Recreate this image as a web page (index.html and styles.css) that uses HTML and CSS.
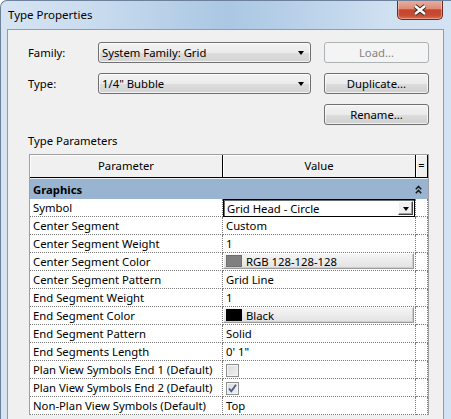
FILE: index.html
```html
<!DOCTYPE html>
<html>
<head>
<meta charset="utf-8">
<title>Type Properties</title>
<link rel="stylesheet" href="styles.css">
</head>
<body>
<div class="window">
  <div class="titlebar">
    <span class="title">Type Properties</span>
    <div class="close">
      <svg width="16" height="12" viewBox="0 0 16 12">
        <path d="M3 2 L13 10 M13 2 L3 10" stroke="#3b2a26" stroke-width="4.2" fill="none"/>
        <path d="M3 2 L13 10 M13 2 L3 10" stroke="#ffffff" stroke-width="2.4" fill="none"/>
      </svg>
    </div>
  </div>
  <div class="client">
    <div class="form">
      <span class="lbl">Family:</span>
      <div class="combo"><span>System Family: Grid</span><span class="arrow"></span></div>
      <div class="btn disabled">Load...</div>

      <span class="lbl">Type:</span>
      <div class="combo"><span>1/4" Bubble</span><span class="arrow"></span></div>
      <div class="btn">Duplicate...</div>

      <div class="btn third">Rename...</div>
    </div>

    <div class="section-label">Type Parameters</div>

    <div class="grid">
      <div class="thead">
        <div class="th">Parameter</div>
        <div class="th">Value</div>
        <div class="th eq">=</div>
      </div>
      <div class="group">
        <span>Graphics</span>
        <svg class="chev" width="7" height="9" viewBox="0 0 7 9">
          <path d="M0.8 4.2 L3.5 1.4 L6.2 4.2 M0.8 8.2 L3.5 5.4 L6.2 8.2" stroke="#1a1a1a" stroke-width="1.5" fill="none"/>
        </svg>
      </div>

      <div class="row">
        <div class="cell">Symbol</div>
        <div class="cell vsel">
          <div class="vcombo"><span>Grid Head - Circle</span><span class="dd"><span class="arrow"></span></span></div>
        </div>
        <div class="cell"></div>
      </div>
      <div class="row">
        <div class="cell">Center Segment</div>
        <div class="cell">Custom</div>
        <div class="cell"></div>
      </div>
      <div class="row">
        <div class="cell">Center Segment Weight</div>
        <div class="cell">1</div>
        <div class="cell"></div>
      </div>
      <div class="row">
        <div class="cell">Center Segment Color</div>
        <div class="cell vbtn"><div class="colorbtn"><span class="swatch gray"></span><span>RGB 128-128-128</span></div></div>
        <div class="cell"></div>
      </div>
      <div class="row">
        <div class="cell">Center Segment Pattern</div>
        <div class="cell">Grid Line</div>
        <div class="cell"></div>
      </div>
      <div class="row">
        <div class="cell">End Segment Weight</div>
        <div class="cell">1</div>
        <div class="cell"></div>
      </div>
      <div class="row">
        <div class="cell">End Segment Color</div>
        <div class="cell vbtn"><div class="colorbtn"><span class="swatch black"></span><span>Black</span></div></div>
        <div class="cell"></div>
      </div>
      <div class="row">
        <div class="cell">End Segment Pattern</div>
        <div class="cell">Solid</div>
        <div class="cell"></div>
      </div>
      <div class="row">
        <div class="cell">End Segments Length</div>
        <div class="cell">0' 1"</div>
        <div class="cell"></div>
      </div>
      <div class="row">
        <div class="cell">Plan View Symbols End 1 (Default)</div>
        <div class="cell"><span class="check"></span></div>
        <div class="cell"></div>
      </div>
      <div class="row">
        <div class="cell">Plan View Symbols End 2 (Default)</div>
        <div class="cell"><span class="check">
          <svg width="11" height="11" viewBox="0 0 11 11"><path d="M2 5.5 L4.3 8.2 L9 1.8" stroke="#4b5b8c" stroke-width="1.8" fill="none"/></svg>
        </span></div>
        <div class="cell"></div>
      </div>
      <div class="row">
        <div class="cell">Non-Plan View Symbols (Default)</div>
        <div class="cell">Top</div>
        <div class="cell"></div>
      </div>
    </div>
  </div>
</div>
</body>
</html>
```

FILE: styles.css
```css
* { box-sizing: border-box; }
html, body { margin: 0; padding: 0; }
body {
  width: 451px;
  height: 419px;
  overflow: hidden;
  background: #ffffff;
  font-family: "Noto Sans", "Liberation Sans", Arial, sans-serif;
  font-size: 11.3px;
  color: #000;
}

.window {
  width: 451px;
  height: 419px;
  display: flex;
  flex-direction: column;
  border-top: 1px solid #6d819b;
  border-left: 1px solid #6d819b;
  border-top-left-radius: 7px;
  overflow: hidden;
  background:
    linear-gradient(90deg, #d6e4f2 0%, #c8dbee 22%, #aac7e3 50%, #b9d1e9 66%, #cfe0f1 86%, #d3e3f3 100%);
}

.titlebar {
  height: 28px;
  display: flex;
  align-items: flex-start;
  padding-left: 7px;
}
.title {
  margin-top: 6px;
  line-height: 16px;
  font-size: 11.5px;
  color: #000;
}
.close {
  margin-left: auto;
  margin-right: 8px;
  margin-top: -1px;
  width: 46px;
  height: 20px;
  border: 1px solid #6e2a1f;
  border-top: none;
  border-radius: 0 0 5px 5px;
  background: linear-gradient(180deg, #eab0a2 0%, #dd8c78 45%, #c8452d 52%, #c74a31 80%, #d8704f 100%);
  box-shadow: inset 0 0 0 1px rgba(255, 220, 210, 0.45);
  display: flex;
  align-items: center;
  justify-content: center;
}
.close svg { display: block; }

.client {
  margin-left: 6px;
  width: 437px;
  flex: 1;
  border: 1px solid #8d9cae;
  border-bottom: none;
  background: #f0f0f0;
  padding: 12px 0 0 20px;
}

.form {
  display: grid;
  grid-template-columns: 57px 213px 105px;
  grid-auto-rows: 21px;
  column-gap: 13px;
  row-gap: 10px;
}
.lbl {
  line-height: 21px;
}
.combo {
  display: flex;
  align-items: center;
  justify-content: space-between;
  border: 1px solid #707070;
  border-radius: 3px;
  background: linear-gradient(180deg, #f3f3f3 0%, #ebebeb 50%, #dddddd 51%, #d3d3d3 100%);
  padding: 0 6px 0 3px;
  box-shadow: inset 0 0 0 1px rgba(255,255,255,0.7);
  line-height: 19px;
}
.arrow {
  width: 0;
  height: 0;
  border-left: 3.5px solid transparent;
  border-right: 3.5px solid transparent;
  border-top: 4px solid #000;
}
.btn {
  border: 1px solid #707070;
  border-radius: 3px;
  background: linear-gradient(180deg, #f2f2f2 0%, #ebebeb 50%, #dddddd 51%, #cfcfcf 100%);
  box-shadow: inset 0 0 0 1px rgba(255,255,255,0.7);
  text-align: center;
  line-height: 19px;
}
.btn.disabled {
  border-color: #adb2b5;
  background: #f4f4f4;
  color: #838383;
  box-shadow: none;
}
.btn.third { grid-column: 3; }

.section-label {
  margin-top: 8px;
  line-height: 15px;
}

.grid {
  margin-top: 6px;
  margin-left: 1px;
  width: 400px;
  border: 1px solid #a0a0a0;
  border-bottom: none;
  background: #ffffff;
}
.thead {
  display: grid;
  grid-template-columns: 193px 193px 12px;
  height: 23px;
}
.th {
  background: #f0f0f0;
  border-right: 1px solid #000;
  border-bottom: 1px solid #000;
  box-shadow: inset 1px 1px 0 #ffffff;
  text-align: center;
  line-height: 21px;
}
.th.eq { font-size: 11px; line-height: 20px; }

.group {
  height: 21px;
  border-top: 1px solid #eef2f7;
  background: #99b4d1;
  display: flex;
  align-items: center;
  justify-content: space-between;
  padding: 0 6px 0 3px;
  font-weight: bold;
}
.chev { display: block; margin-top: 1px; }

.row {
  display: grid;
  grid-template-columns: 193px 193px 12px;
  height: 18px;
}
.cell {
  border-right: 1px dotted #7a7a7a;
  border-bottom: 1px dotted #7a7a7a;
  padding-left: 3px;
  line-height: 17px;
  white-space: nowrap;
  overflow: hidden;
}
.cell.vsel { padding: 0; border-bottom: none; }
.vcombo {
  height: 18px;
  border: 1px solid #000;
  box-shadow: inset 1px 1px 0 #6a6a6a;
  background: #fff;
  display: flex;
  align-items: center;
  justify-content: space-between;
  padding: 0 1px 0 3px;
}
.dd {
  width: 15px;
  height: 14px;
  background: #f0f0f0;
  border-top: 1px solid #ffffff;
  border-left: 1px solid #ffffff;
  border-right: 1px solid #404040;
  border-bottom: 1px solid #404040;
  box-shadow: inset -1px -1px 0 #a0a0a0;
  display: flex;
  align-items: center;
  justify-content: center;
}
.dd .arrow { margin-top: 1px; }

.cell.vbtn { padding: 0; }
.colorbtn {
  height: 16px;
  margin-right: 1px;
  display: flex;
  align-items: center;
  gap: 4px;
  padding-left: 2px;
  background: linear-gradient(180deg, #f4f4f4 0%, #ececec 50%, #e2e2e2 100%);
  border-top: 1px solid #ffffff;
  border-left: 1px solid #ffffff;
  border-right: 1px solid #9a9a9a;
  border-bottom: 1px solid #9a9a9a;
  box-shadow: inset -1px -1px 0 #cfcfcf;
}
.swatch {
  width: 16px;
  height: 12px;
  display: inline-block;
}
.swatch.gray { background: #808080; border: 1px solid #707070; }
.swatch.black { background: #000; }

.check {
  display: flex;
  align-items: center;
  justify-content: center;
  width: 13px;
  height: 13px;
  margin-top: 3px;
  border: 1px solid #8e8f8f;
  background: linear-gradient(135deg, #dcdcdc 0%, #f1f1f1 100%);
  box-shadow: inset 0 0 0 1px #f4f4f4;
}
.check svg { display: block; }
```
